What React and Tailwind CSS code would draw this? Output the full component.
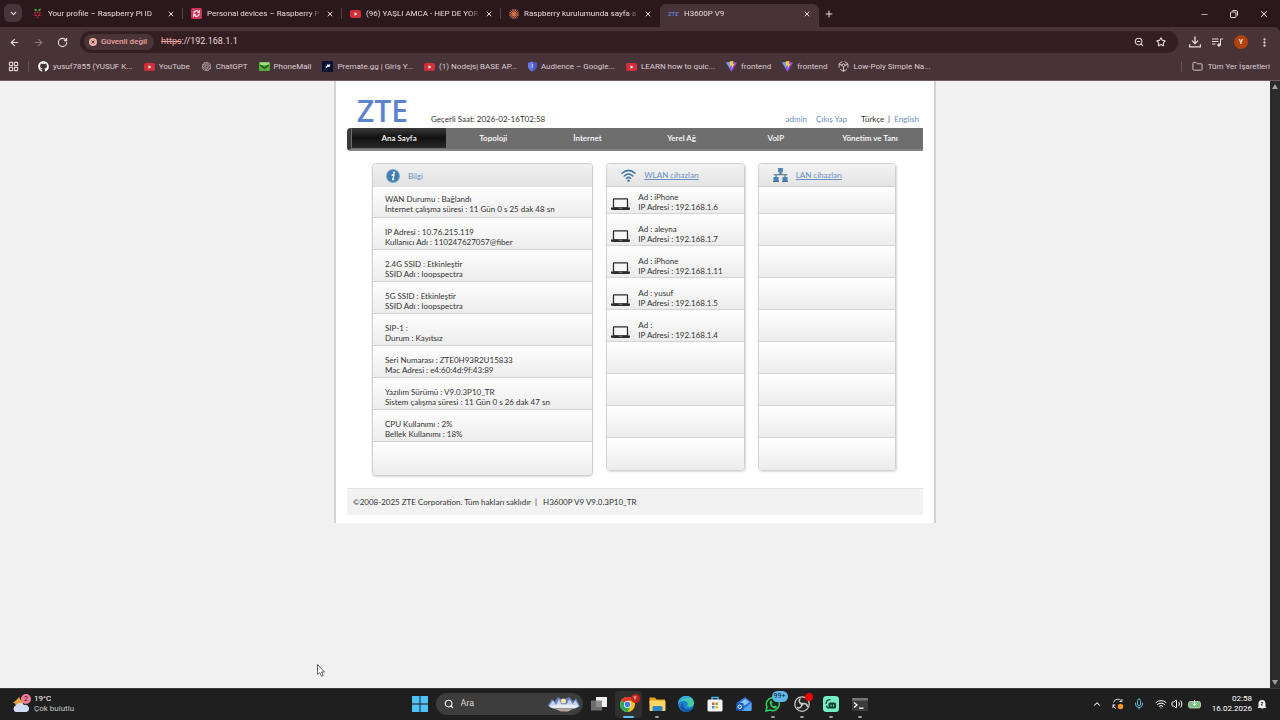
import {
  ArrowLeft, ArrowRight, RotateCw, X, Plus, Minus, ChevronDown, ChevronUp,
  Folder, Star, ZoomOut, EllipsisVertical, Search, Mic, Wifi, Volume2, LayoutGrid,
} from 'lucide-react';
import { FaGithub } from 'react-icons/fa';
import { RiOpenaiFill } from 'react-icons/ri';

/* ---------- small logos ---------- */

const RaspberryIcon = () => (
  <svg viewBox="0 0 20 20" className="w-[11px] h-[11px] shrink-0">
    <path d="M4 1l5 2-1 3-3-1zM16 1l-5 2 1 3 3-1z" fill="#5fae45" />
    <g fill="#c2274f">
      <circle cx="10" cy="8" r="1.6" /><circle cx="5.5" cy="9" r="1.6" /><circle cx="14.5" cy="9" r="1.6" />
      <circle cx="7" cy="13" r="1.8" /><circle cx="13" cy="13" r="1.8" /><circle cx="10" cy="17" r="1.6" />
      <circle cx="3.6" cy="13" r="1" /><circle cx="16.4" cy="13" r="1" />
    </g>
  </svg>
);

const ConnectIcon = () => (
  <svg viewBox="0 0 20 20" className="w-[11px] h-[11px] shrink-0">
    <rect width="20" height="20" rx="3" fill="#cf3558" />
    <path d="M5 10a5 5 0 0 1 8-4M15 10a5 5 0 0 1-8 4" fill="none" stroke="#fff" strokeWidth="2.2" />
    <path d="M11 9h5V3zM9 11H4v6z" fill="#fff" />
  </svg>
);

const YoutubeIcon = () => (
  <svg viewBox="0 0 22 16" className="w-[11px] h-[8px] shrink-0">
    <rect width="22" height="16" rx="4" fill="#d32f39" />
    <path d="M9 4.5v7l6-3.5z" fill="#fff" />
  </svg>
);

const ClaudeIcon = () => (
  <svg viewBox="0 0 20 20" className="w-[10px] h-[10px] shrink-0" stroke="#d97b52" strokeWidth="1.7" strokeLinecap="round">
    <path d="M10 0v20M0 10h20M3 3l14 14M17 3L3 17M6.500 1l7 18M13.500 1l-7 18M1 6.500l18 7M1 13.500l18-7" />
  </svg>
);

const MailIcon = () => (
  <svg viewBox="0 0 22 18" className="w-[11px] h-[9px] shrink-0">
    <rect width="22" height="18" rx="2" fill="#56ad3c" />
    <path d="M1 1h20l-3 5H4z" fill="#a6e08a" />
    <path d="M3 5l8 6 8-6v3l-8 6-8-6z" fill="#173f13" />
  </svg>
);

const PremateIcon = () => (
  <svg viewBox="0 0 22 22" className="w-[11px] h-[11px] shrink-0">
    <rect width="22" height="22" fill="#0b1130" />
    <path d="M10 7h7l-2 5h-4l-4 4 1-4H6l4-2z" fill="#e8ecff" />
  </svg>
);

const ShieldIcon = () => (
  <svg viewBox="0 0 18 20" className="w-[9px] h-[11px] shrink-0">
    <path d="M9 0l9 3v6c0 5-4 9-9 11C4 18 0 14 0 9V3z" fill="#4a58c4" />
    <path d="M9 0v20C4 18 0 14 0 9V3z" fill="#6b7be6" />
    <path d="M9 5v6" stroke="#b9c0f5" strokeWidth="2.5" strokeLinecap="round" />
  </svg>
);

const ViteIcon = () => (
  <svg viewBox="0 0 22 22" className="w-[11px] h-[11px] shrink-0">
    <path d="M0 3l11-1 11 1-11 19z" fill="#9a4bf0" />
    <path d="M0 3l7-.5L9 17z" fill="#5aa9ff" />
    <path d="M7 1l8-1-2 6 4-1-6 11 1-7-4 1z" fill="#ffcf2e" />
  </svg>
);

const UnityIcon = () => (
  <svg viewBox="0 0 20 20" className="w-[11px] h-[11px] shrink-0" fill="none" stroke="#d5c6cb" strokeWidth="1.8">
    <path d="M8 1L2 5v7M12 1l6 4v7M4 15l6 4 6-4M10 10v9M10 10L2 5M10 10l8-5M6 7.500l4-2.500 4 2.500" />
  </svg>
);

const ZteMini = () => (
  <span className="w-[11px] shrink-0 text-[6px] leading-[10px] font-bold italic text-[#5f7bc0]">ZTE</span>
);

/* ---------- browser chrome ---------- */

const TABS = [
  { title: 'Your profile – Raspberry Pi ID', Icon: RaspberryIcon },
  { title: 'Personal devices – Raspberry P', Icon: ConnectIcon },
  { title: '(96) YAŞLI AMCA - HEP DE YOR', Icon: YoutubeIcon },
  { title: 'Raspberry kurulumunda sayfa a', Icon: ClaudeIcon },
  { title: 'H3600P V9', Icon: ZteMini, active: true },
];

const BOOKMARKS = [
  { title: 'yusuf7855 (YUSUF K...', icon: <FaGithub className="w-[11px] h-[11px] shrink-0 text-white" /> },
  { title: 'YouTube', icon: <YoutubeIcon /> },
  { title: 'ChatGPT', icon: <RiOpenaiFill className="w-[11px] h-[11px] shrink-0 text-[#d5c6cb]" /> },
  { title: 'PhoneMail', icon: <MailIcon /> },
  { title: 'Premate.gg | Giriş Y...', icon: <PremateIcon /> },
  { title: '(1) Nodejs| BASE AP...', icon: <YoutubeIcon /> },
  { title: 'Audience – Google...', icon: <ShieldIcon /> },
  { title: 'LEARN how to quic...', icon: <YoutubeIcon /> },
  { title: 'frontend', icon: <ViteIcon /> },
  { title: 'frontend', icon: <ViteIcon /> },
  { title: 'Low-Poly Simple Na...', icon: <UnityIcon /> },
];

function TabStrip() {
  return (
    <div className="flex h-[27px] items-end bg-[#2a181d] pl-1 text-[#e6d9dc]">
      <button aria-label="Sekme ara" className="mb-[5px] flex h-[18px] w-[18px] items-center justify-center rounded-md bg-[#48353b]">
        <ChevronDown size={9} strokeWidth={3} />
      </button>
      <div className="ml-0.5 flex">
        {TABS.map(({ title, Icon, active }, i) => (
          <div key={title} className={`relative flex h-[23px] w-[159px] items-center gap-[5px] px-2 pb-1 ${active ? 'rounded-t-md bg-[#483338]' : ''}`}>
            <Icon />
            <button className="min-w-0 flex-1 overflow-hidden whitespace-nowrap text-left text-[8px] leading-3 [mask-image:linear-gradient(to_right,#000_90%,transparent)]">{title}</button>
            <button aria-label="Sekmeyi kapat"><X size={8} strokeWidth={3} /></button>
            {i < 3 && <span className="absolute right-0 top-1 h-[11px] w-px bg-[#54414a]" />}
          </div>
        ))}
      </div>
      <button aria-label="Yeni sekme" className="mb-2 ml-[5px]"><Plus size={10} strokeWidth={2.5} /></button>
      <div className="mb-2 ml-auto flex items-center gap-[21px] pr-[11px]">
        <button aria-label="Simge durumuna küçült"><Minus size={9} /></button>
        <button aria-label="Geri yükle">
          <svg viewBox="0 0 16 16" className="h-2 w-2" fill="none" stroke="currentColor" strokeWidth="2">
            <rect x="1" y="4" width="11" height="11" rx="2" />
            <path d="M5 1h7a3 3 0 0 1 3 3v7" />
          </svg>
        </button>
        <button aria-label="Kapat"><X size={10} strokeWidth={2.5} /></button>
      </div>
    </div>
  );
}

function Toolbar() {
  return (
    <div className="flex h-[30px] items-center rounded-tr-md bg-[#483338] pl-[9px] pr-[10px] text-[#e6d9dc]">
      <div className="flex gap-[13px]">
        <button aria-label="Geri"><ArrowLeft size={11} strokeWidth={2.5} /></button>
        <button aria-label="İleri" className="text-[#8a767c]"><ArrowRight size={11} strokeWidth={2.5} /></button>
        <button aria-label="Yenile"><RotateCw size={11} strokeWidth={2.5} /></button>
      </div>
      <div className="ml-3 flex h-[22px] flex-1 items-center rounded-full bg-[#331e22] pl-1 pr-3">
        <button className="flex h-4 items-center gap-1 rounded-full bg-[#4b3438] pl-[5px] pr-[7px] text-[8px] font-medium text-[#eba39d]">
          <svg viewBox="0 0 16 16" className="h-2 w-2">
            <circle cx="8" cy="8" r="8" fill="#f2ada4" />
            <path d="M5 5l6 6M11 5l-6 6" stroke="#4b3438" strokeWidth="2" />
          </svg>
          Güvenli değil
        </button>
        <label htmlFor="url" className="ml-[7px] text-[9px] text-[#eba39d] line-through">https</label>
        <input id="url" defaultValue="://192.168.1.1" className="min-w-0 flex-1 bg-transparent text-[9px] outline-none" />
        <div className="flex gap-3">
          <button aria-label="Uzaklaştır"><ZoomOut size={10} strokeWidth={2.5} /></button>
          <button aria-label="Yer işareti"><Star size={10} strokeWidth={2.5} /></button>
        </div>
      </div>
      <div className="ml-[11px] flex items-center gap-[11px]">
        <button aria-label="İndirilenler">
          <svg viewBox="0 0 22 22" className="h-[12px] w-[12px]" fill="none" stroke="currentColor" strokeWidth="2.5">
            <path d="M11 1v13M5.500 8.500l5.500 5.500 5.500-5.500M1 15v5h20v-5" />
          </svg>
        </button>
        <button aria-label="Medya">
          <svg viewBox="0 0 22 18" className="h-[9px] w-[11px]" fill="none" stroke="currentColor" strokeWidth="2">
            <path d="M0 2h13M0 7h13M0 12h7M17 14V2h5" />
            <circle cx="14" cy="14" r="2.500" fill="currentColor" />
          </svg>
        </button>
        <button aria-label="Profil" className="h-[14px] w-[14px] rounded-full bg-[#b1440e] text-[7px] font-medium leading-[14px] text-white">Y</button>
        <button aria-label="Menü"><EllipsisVertical size={11} strokeWidth={3} /></button>
      </div>
    </div>
  );
}

function BookmarkBar() {
  return (
    <div className="flex h-6 items-center border-b border-[#6f5c62] bg-[#483338] pb-1 pl-2 pr-[10px] text-[8px] text-[#dccdd1]">
      <button aria-label="Uygulamalar"><LayoutGrid size={11} strokeWidth={2.5} /></button>
      <span className="ml-[9px] mr-[9px] h-[11px] w-px bg-[#65525a]" />
      <nav className="flex gap-[11px]">
        {BOOKMARKS.map((b, i) => (
          <a key={i} href="#" className="flex items-center gap-1 whitespace-nowrap">{b.icon}{b.title}</a>
        ))}
      </nav>
      <span className="ml-auto mr-[10px] h-[11px] w-px bg-[#65525a]" />
      <a href="#" className="flex items-center gap-[5px] whitespace-nowrap"><Folder size={11} />Tüm Yer İşaretleri</a>
    </div>
  );
}

/* ---------- router page ---------- */

const NAV = ['Ana Sayfa', 'Topoloji', 'İnternet', 'Yerel Ağ', 'VoIP', 'Yönetim ve Tanı'];

const INFO = [
  ['WAN Durumu : Bağlandı', 'İnternet çalışma süresi : 11 Gün 0 s 25 dak 48 sn'],
  ['IP Adresi : 10.76.215.119', 'Kullanıcı Adı : 110247627057@fiber'],
  ['2.4G SSID : Etkinleştir', 'SSID Adı : loopspectra'],
  ['5G SSID : Etkinleştir', 'SSID Adı : loopspectra'],
  ['SIP-1 :', 'Durum : Kayıtsız'],
  ['Seri Numarası : ZTE0H93R2U15833', 'Mac Adresi : e4:60:4d:9f:43:89'],
  ['Yazılım Sürümü : V9.0.3P10_TR', 'Sistem çalışma süresi : 11 Gün 0 s 26 dak 47 sn'],
  ['CPU Kullanımı : 2%', 'Bellek Kullanımı : 18%'],
  [],
];

const WLAN = [
  ['iPhone', '192.168.1.6'],
  ['aleyna', '192.168.1.7'],
  ['iPhone', '192.168.1.11'],
  ['yusuf', '192.168.1.5'],
  ['', '192.168.1.4'],
  null, null, null, null,
];

const LAN = Array(9).fill(null);

const LaptopIcon = () => (
  <svg viewBox="0 0 38 24" className="mb-[3px] h-[12px] w-[19px] shrink-0">
    <rect x="5" y="1.500" width="28" height="18" rx="1" fill="#f8f8f8" stroke="#2b2b2b" strokeWidth="2.500" />
    <path d="M0 19h38v2q0 3-3 3H3q-3 0-3-3z" fill="#2b2b2b" />
    <path d="M15 20.500h8" stroke="#999" strokeWidth="1.500" />
  </svg>
);

const InfoIcon = () => (
  <svg viewBox="0 0 28 28" className="h-[14px] w-[14px]">
    <circle cx="14" cy="14" r="14" fill="#7fa6c9" />
    <circle cx="14" cy="14" r="12" fill="#3f7fb5" />
    <circle cx="16" cy="7.500" r="2.300" fill="#fff" />
    <path d="M11 12h5l-2.500 9h3" fill="none" stroke="#fff" strokeWidth="2.600" />
  </svg>
);

const WlanIcon = () => (
  <svg viewBox="0 0 30 26" className="h-[13px] w-[15px]" fill="none" stroke="#3f75a3" strokeWidth="3" strokeLinecap="round">
    <path d="M2 8.500Q15-3 28 8.500M6.500 14Q15 6 23.500 14M11 18.500Q15 15 19 18.500" />
    <circle cx="15" cy="23.500" r="1" fill="#3f75a3" />
  </svg>
);

const LanIcon = () => (
  <svg viewBox="0 0 30 28" className="h-[14px] w-[15px]">
    <path d="M15 8v6M1 13.500h28M6 14v5M24 14v5" stroke="#4b6a86" strokeWidth="2" />
    <rect x="10" y="0" width="10" height="8" fill="#5288bb" />
    <path d="M11 10h8" stroke="#4b6a86" strokeWidth="2" />
    <rect x="1" y="18" width="10" height="8" fill="#4681b8" />
    <rect x="19" y="18" width="10" height="8" fill="#4681b8" />
    <path d="M0 27h12M18 27h12" stroke="#4b6a86" strokeWidth="2" />
  </svg>
);

function DevicePanel({ icon, title, rows }) {
  return (
    <section className="flex-[138] self-start rounded border border-[#d0d0d0] shadow-[1px_1px_2px_rgba(0,0,0,0.15)]">
      <h2 className="flex h-[23px] items-center gap-2 rounded-t border-b border-[#cfcfcf] bg-gradient-to-b from-[#f3f3f3] to-[#e4e4e4] pl-[14px]">
        {icon}
        <a href="#" className="text-[#6a8fc6] underline">{title}</a>
      </h2>
      <ul>
        {rows.map((row, i) => (
          <li key={i} className="flex h-8 items-end gap-2 border-b border-[#d3d3d3] bg-gradient-to-b from-white to-[#ececec] pl-1 first:h-[27px] last:rounded-b last:border-0">
            {row && (
              <>
                <LaptopIcon />
                <div className="pb-px leading-[10px]">
                  <p>Ad : {row[0]}</p>
                  <p>IP Adresi : {row[1]}</p>
                </div>
              </>
            )}
          </li>
        ))}
      </ul>
    </section>
  );
}

function RouterPage() {
  return (
    <div className="mx-auto w-full max-w-[602px] self-start border-x-2 border-[#d3d3d3] bg-white px-[11px] pb-2 font-['Lato','Noto_Sans',sans-serif] text-[8px] text-[#333]">
      <header className="flex items-end pl-[10px] pt-3">
        <h1 className="pr-[23px] font-['Open_Sans',sans-serif] text-[30px] font-semibold leading-[35px] text-[#5b84cc]">ZTE</h1>
        <p className="pb-[3px]">Geçerli Saat: 2026-02-16T02:58</p>
        <div className="ml-auto flex pb-[3px] pr-1">
          <a href="#" className="mr-[9px] text-[#6a8fc6]">admin</a>
          <a href="#" className="mr-[14px] text-[#6a8fc6]">Çıkış Yap</a>
          <span>Türkçe</span>
          <span className="mx-1">|</span>
          <a href="#" className="text-[#6a8fc6]">English</a>
        </div>
      </header>

      <nav className="flex h-[23px] rounded-l border-b-2 border-l-4 border-b-[#858585] border-l-[#3a3a3a] bg-[#6e6e6e] pl-px pr-[6px]">
        {NAV.map((item, i) => (
          <a key={item} href="#" className={`flex h-5 flex-1 items-center justify-center font-semibold text-white ${i === 0 ? 'bg-gradient-to-b from-[#3a3a3a] via-[#111] to-[#2b2b2b]' : ''}`}>{item}</a>
        ))}
      </nav>

      <main className="flex gap-[13px] pb-3 pl-[25px] pr-[27px] pt-3">
        <section className="flex-[222] rounded border border-[#d0d0d0] shadow-[0_1px_2px_rgba(0,0,0,0.15)]">
          <h2 className="flex h-[23px] items-center gap-2 rounded-t bg-gradient-to-b from-[#f0f0f0] to-[#e2e2e2] pl-[13px] text-[#6a8fc6]">
            <InfoIcon />Bilgi
          </h2>
          <ul>
            {INFO.map((lines, i) => (
              <li key={i} className="h-8 border-b border-[#d3d3d3] bg-gradient-to-b from-white to-[#ececec] pl-3 pt-[9px] leading-[10px] first:h-[31px] first:pt-[7px] last:h-[33px] last:rounded-b last:border-0">
                {lines.map((l) => <p key={l}>{l}</p>)}
              </li>
            ))}
          </ul>
        </section>
        <DevicePanel icon={<WlanIcon />} title="WLAN cihazları" rows={WLAN} />
        <DevicePanel icon={<LanIcon />} title="LAN cihazları" rows={LAN} />
      </main>

      <footer className="h-[27px] border-t border-[#e2e2e2] bg-[#f2f2f2] pl-[6px] leading-[26px]">
        ©2008-2025 ZTE Corporation. Tüm hakları saklıdır &nbsp;|&nbsp; &nbsp;H3600P V9 V9.0.3P10_TR
      </footer>
    </div>
  );
}

/* ---------- taskbar ---------- */

const WindowsIcon = () => (
  <svg viewBox="0 0 32 32" className="h-4 w-4">
    <path d="M0 0h15v15H0zM17 0h15v15H17zM0 17h15v15H0zM17 17h15v15H17z" fill="#4cc2f5" />
  </svg>
);

const TaskViewIcon = () => (
  <svg viewBox="0 0 32 28" className="h-[14px] w-4">
    <rect x="10" width="22" height="20" fill="#f1f1f1" />
    <rect y="7" width="22" height="20" fill="#7d7d7d" opacity=".85" />
  </svg>
);

const ChromeIcon = () => (
  <svg viewBox="0 0 36 36" className="h-[18px] w-[18px]">
    <circle cx="17" cy="19" r="15" fill="#fbc116" />
    <path d="M17 19L4 11.500A15 15 0 0 1 30 11.500H17z" fill="#e33b2e" />
    <path d="M17 19L4 11.500A15 15 0 0 0 17 34l6.500-11z" fill="#31a853" />
    <circle cx="17" cy="19" r="7" fill="#fff" />
    <circle cx="17" cy="19" r="5.500" fill="#3f7de8" />
  </svg>
);

const ExplorerIcon = () => (
  <svg viewBox="0 0 34 32" className="h-4 w-[17px]">
    <path d="M1 3h11l3 4h17v8H1z" fill="#e6a417" />
    <rect x="1" y="9" width="32" height="21" rx="2" fill="#fcd462" />
    <path d="M7 30v-7q0-3 3-3h14q3 0 3 3v7z" fill="#2f87c9" />
  </svg>
);

const EdgeIcon = () => (
  <svg viewBox="0 0 32 32" className="h-4 w-4">
    <circle cx="16" cy="16" r="16" fill="#1c7fd0" />
    <path d="M0 16C1 6 8 0 16 0c9 0 16 6 16 14 0 5-4 8-9 8-4 0-6-2-4-4 2-5-3-9-8-8-5 0-9 2-11 6z" fill="#43c9a8" />
    <path d="M0 16C1 6 8 0 16 0c4 0 8 1 11 4C17 3 5 6 0 16z" fill="#35a9dd" />
    <path d="M10 17c0 8 8 12 19 8-6 9-17 9-22 3-4-5-3-11 4-15-1 1-1 3-1 4z" fill="#1458a6" />
  </svg>
);

const StoreIcon = () => (
  <svg viewBox="0 0 32 32" className="h-4 w-4">
    <path d="M10 8V3h12v5" fill="none" stroke="#45b2ec" strokeWidth="3" />
    <rect x="1" y="7" width="30" height="24" rx="3" fill="#f4f4f4" />
    <path d="M10 13h5v5h-5z" fill="#e8502f" /><path d="M17 13h5v5h-5z" fill="#7cb52b" />
    <path d="M10 20h5v5h-5z" fill="#2c9fe3" /><path d="M17 20h5v5h-5z" fill="#f6b51c" />
  </svg>
);

const OutlookIcon = () => (
  <svg viewBox="0 0 32 32" className="h-4 w-4">
    <path d="M2 13L18 2l13 10v15q0 3-3 3H8z" fill="#2d6fd8" />
    <path d="M8 14L18 6l9 6-12 8z" fill="#8bc8f7" />
    <path d="M31 13L10 30h18q3 0 3-3z" fill="#55a5f0" />
    <rect x="0" y="14" width="15" height="15" rx="2" fill="#1658b5" />
    <circle cx="7.500" cy="21.500" r="3.500" fill="none" stroke="#fff" strokeWidth="2" />
  </svg>
);

const WhatsappIcon = () => (
  <svg viewBox="0 0 32 32" className="h-4 w-4">
    <path d="M2 30l2-8A13 13 0 1 1 10 28z" fill="#122b1b" stroke="#30d05f" strokeWidth="3" />
    <path d="M10 10l3-1 2 5-2 2q2 4 5 5l2-2 4 2q0 4-4 4C14 25 8 17 10 10z" fill="#30d05f" />
  </svg>
);

const ObsIcon = () => (
  <svg viewBox="0 0 32 32" className="h-4 w-4">
    <circle cx="16" cy="16" r="14.500" fill="#262626" stroke="#c9c9c9" strokeWidth="2.500" />
    <path d="M16 16C9 14 9 8 13 5M16 16c6-3 11 1 11 6M16 16c0 7-5 9-10 7" fill="none" stroke="#c9c9c9" strokeWidth="3" />
    <circle cx="16" cy="16" r="3" fill="#c9c9c9" />
  </svg>
);

const StreamIcon = () => (
  <svg viewBox="0 0 32 32" className="h-4 w-4">
    <rect width="32" height="32" rx="7" fill="#74efc4" />
    <rect x="11" y="13" width="15" height="12" rx="3" fill="#0b3a34" />
    <path d="M6 16q0-9 9-9M7 19q0 5 5 5" stroke="#0b3a34" strokeWidth="2.500" fill="none" />
    <path d="M16 17v4M21 17v4" stroke="#74efc4" strokeWidth="2" />
  </svg>
);

const TerminalIcon = () => (
  <svg viewBox="0 0 32 26" className="h-[13px] w-4">
    <rect width="32" height="26" rx="2" fill="#3b3b3b" />
    <path d="M0 2q0-2 2-2h28q2 0 2 2v3H0z" fill="#777" />
    <path d="M4 9l6 5-6 5M14 20h9" fill="none" stroke="#fff" strokeWidth="2.500" />
  </svg>
);

const WeatherIcon = () => (
  <svg viewBox="0 0 36 40" className="h-5 w-[18px]">
    <path d="M14 6l3 6 7 2-4 10H8l-2-5-4-2 6-4z" fill="#e9a13c" />
    <path d="M7 36a7 7 0 0 1 1-13 9 9 0 0 1 16-1 7 7 0 0 1 5 14z" fill="#cfdcf7" />
  </svg>
);

const APPS = [
  { name: 'Görev görünümü', Icon: TaskViewIcon },
  { name: 'Chrome', Icon: ChromeIcon, active: true, badge: 'Y', badgeClass: 'right-[2px] top-[3px] w-[9px] bg-[#c4261c] text-[5px] leading-[9px]' },
  { name: 'Dosya Gezgini', Icon: ExplorerIcon, open: true },
  { name: 'Edge', Icon: EdgeIcon },
  { name: 'Store', Icon: StoreIcon },
  { name: 'Outlook', Icon: OutlookIcon },
  { name: 'WhatsApp', Icon: WhatsappIcon, open: true, badge: '99+', badgeClass: '-right-[1px] top-0 w-4 bg-[#5fb8ea] text-[7px] leading-[11px] text-[#10202c]' },
  { name: 'OBS', Icon: ObsIcon, open: true, badge: '\u00a0', badgeClass: 'right-[3px] top-[2px] w-2 bg-[#f00000] text-[5px] leading-[8px]' },
  { name: 'Streamlabs', Icon: StreamIcon, open: true },
  { name: 'Terminal', Icon: TerminalIcon, open: true },
];

function Taskbar() {
  return (
    <footer className="flex h-8 items-center border-t border-[#3a3a3a] bg-[#1f1f1f] pb-px text-[8px] text-white">
      <div className="flex flex-1 items-center pl-3">
        <button className="flex items-center gap-1 text-left">
          <span className="relative">
            <WeatherIcon />
            <span className="absolute -right-[1px] top-0 h-[10px] w-[10px] rounded-full bg-[#f27d96] text-center text-[7px] leading-[10px] text-[#3b1119]">2</span>
          </span>
          <span className="leading-[10px]">
            19°C<br /><span className="text-[#c9c9c9]">Çok bulutlu</span>
          </span>
        </button>
      </div>

      <div className="flex items-center pl-[6px]">
        <button aria-label="Başlat"><WindowsIcon /></button>
        <div className="ml-2 mr-[2px] flex h-[22px] w-[147px] items-center gap-[7px] rounded-full bg-[#3d3d3d] pl-2 pr-[3px]">
          <Search size={10} strokeWidth={2.5} />
          <input aria-label="Ara" placeholder="Ara" className="min-w-0 flex-1 bg-transparent text-[9px] outline-none placeholder:text-[#d8d8d8]" />
          <svg viewBox="0 0 64 32" className="h-4 w-8">
            <path d="M0 18L8 6l5 5 7-9 10 6 12-6 8 8 6-5 8 15-6 4H4z" fill="#6480b8" />
            <path d="M2 20L10 9l6 9 6-12 6 12zM36 18l7-12 6 10 6-7 7 12z" fill="#c8d4ee" />
            <circle cx="31" cy="10" r="5" fill="#ffe2a6" />
            <path d="M2 20q30-7 60 0l-8 5H10z" fill="#e9ebf5" />
            <path d="M14 26h36l-10 5H26z" fill="#b69f93" />
          </svg>
        </div>
        {APPS.map(({ name, Icon, active, open, badge, badgeClass }) => (
          <button key={name} aria-label={name} className="relative mx-px flex h-[27px] w-[27px] items-center justify-center rounded">
            {active && <span className="absolute inset-0 rounded bg-[#303030]" />}
            <span className="relative"><Icon /></span>
            {badge && <span className={`absolute rounded-full text-center ${badgeClass}`}>{badge}</span>}
            {active && <span className="absolute bottom-0 h-[2px] w-[11px] rounded-full bg-[#5ec3f2]" />}
            {open && <span className="absolute bottom-0 h-[2px] w-1 rounded-full bg-[#9a9a9a]" />}
          </button>
        ))}
      </div>

      <div className="flex flex-1 items-center justify-end pr-3">
        <button aria-label="Gizli simgeler" className="mr-[10px]"><ChevronUp size={10} strokeWidth={2.5} /></button>
        <svg viewBox="0 0 24 24" className="mr-[9px] h-3 w-3" fill="none" stroke="#ddd" strokeWidth="2">
          <path d="M3 9a9 9 0 0 1 16-3M20 2v5h-5M2 13a9 9 0 0 0 6 8M2 20v-6h5" />
          <circle cx="17" cy="17" r="5.500" fill="#f7941d" stroke="none" />
        </svg>
        <Mic size={12} className="mr-[10px] text-[#64bcd4]" />
        <Wifi size={12} className="mr-1" />
        <Volume2 size={12} className="mr-[5px]" />
        <svg viewBox="0 0 28 18" className="mr-[10px] h-[9px] w-[14px]">
          <rect x="1" y="3" width="24" height="13" rx="4" fill="#79bd7c" stroke="#cfe9cf" strokeWidth="1.500" />
          <path d="M13 0v10M9 7l4 4 4-4" stroke="#fff" strokeWidth="2" fill="none" />
        </svg>
        <span className="mr-[5px] text-right leading-[10px]">02:58<br />16.02.2026</span>
        <svg viewBox="0 0 22 22" className="h-[11px] w-[11px]">
          <path d="M3 16V9q0-7 7-7t7 7v7l2 2H1zM8 19h5q-2 3-5 0z" fill="#f1f1f1" />
          <path d="M8 7h4l-4 5h4M16 2h4l-4 4h4" stroke="#1f1f1f" strokeWidth="1.500" fill="none" />
        </svg>
      </div>
    </footer>
  );
}

export default function App() {
  return (
    <div className="relative flex min-h-screen flex-col font-['Roboto','Noto_Sans',sans-serif]">
      <div className="bg-[#2a181d]">
        <TabStrip />
        <Toolbar />
        <BookmarkBar />
      </div>
      <div className="flex flex-1 bg-[#f1f1f1]">
        <RouterPage />
        <div className="flex w-[10px] shrink-0 flex-col items-center justify-between bg-[#2b2b2b] py-[3px]">
          <svg viewBox="0 0 6 5" className="h-[5px] w-[6px]"><path d="M3 0l3 5H0z" fill="#a0a0a0" /></svg>
          <svg viewBox="0 0 6 5" className="h-[5px] w-[6px]"><path d="M3 5l3-5H0z" fill="#a0a0a0" /></svg>
        </div>
      </div>
      <Taskbar />
      <svg viewBox="0 0 16 26" className="absolute left-[317px] top-[664px] h-[13px] w-2">
        <path d="M1 1v20l4.500-4 3.500 7.500 3.500-1.500-3.500-7h6z" fill="#fff" stroke="#333" strokeWidth="1.500" />
      </svg>
    </div>
  );
}
